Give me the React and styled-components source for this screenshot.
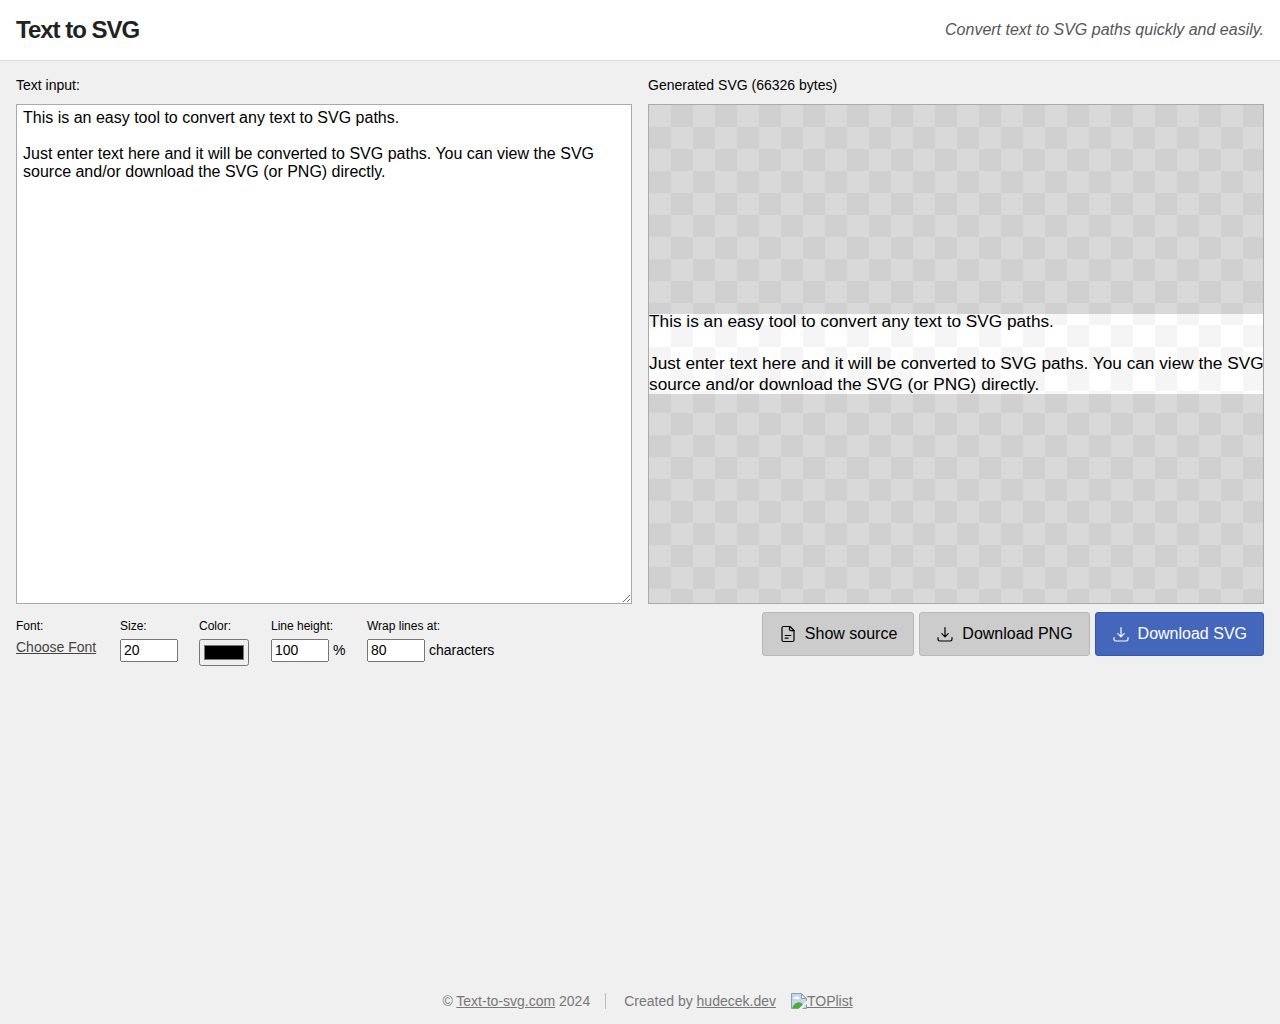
import React, { useState } from "react";
import styled, { createGlobalStyle, css } from "styled-components";

const GlobalStyle = createGlobalStyle`
  *, *::before, *::after { box-sizing: border-box; }
  body {
    margin: 0;
    background: #f0f0f0;
    color: #000;
    font-family: "Liberation Sans", Arial, Helvetica, sans-serif;
    font-size: 14px;
    line-height: 16px;
  }
`;

const Page = styled.div`
  min-height: 100vh;
  display: flex;
  flex-direction: column;
`;

const Header = styled.header`
  display: flex;
  align-items: center;
  justify-content: space-between;
  padding: 16px;
  background: #fff;
  border-bottom: 1px solid #ddd;
`;

const Title = styled.h1`
  margin: 0;
  color: #222;
  font-size: 24px;
  line-height: 28px;
  letter-spacing: -1px;
`;

const Tagline = styled.p`
  margin: 0;
  color: #555;
  font-size: 16px;
  line-height: 18px;
  font-style: italic;
`;

const Main = styled.main`
  flex: 1;
  display: grid;
  grid-template-columns: 1fr 1fr;
  align-items: start;
  gap: 16px;
  padding: 16px;
`;

const Column = styled.section`
  display: flex;
  flex-direction: column;
  min-width: 0;
`;

const captionStyle = css`
  margin: 0 0 11px;
  font-size: 14px;
  font-weight: normal;
  line-height: 16px;
`;

const Caption = styled.label`
  ${captionStyle}
`;

const PreviewCaption = styled.h2`
  ${captionStyle}
`;

const panelStyle = css`
  height: 500px;
  border: 1px solid #aaa;
`;

const TextInput = styled.textarea`
  ${panelStyle}
  width: 100%;
  margin: 0;
  padding: 4px 6px;
  border-radius: 0;
  outline: none;
  resize: vertical;
  background: #fff;
  color: #000;
  font-family: inherit;
  font-size: 16px;
  line-height: 18px;
`;

const Preview = styled.div`
  ${panelStyle}
  display: flex;
  align-items: center;
  overflow: hidden;
  background: repeating-conic-gradient(#f5f5f5 0% 25%, #fff 0% 50%) 0 0 / 44px 44px;
`;

const Output = styled.svg`
  display: block;
  width: 100%;
  overflow: visible;
  box-shadow: 0 0 0 1000px rgba(0, 0, 0, 0.15);
  font-family: "Liberation Sans", Arial, sans-serif;
  font-size: 20px;
`;

const Controls = styled.form`
  display: grid;
  grid-template-columns: 83px 58px 51px 75px auto;
  justify-content: start;
  column-gap: 21px;
  padding-top: 15px;
`;

const Field = styled.div`
  display: flex;
  flex-direction: column;
  align-items: flex-start;
  gap: 6px;
`;

const FieldLabel = styled.label`
  font-size: 12px;
  line-height: 14px;
`;

const FieldRow = styled.div`
  display: flex;
  align-items: baseline;
  gap: 4px;
`;

const NumberInput = styled.input`
  width: 58px;
  height: 23px;
  margin: 0;
  padding: 1px 2px 2px;
  color: #000;
  font-family: inherit;
  font-size: 14px;
`;

const ColorInput = styled.input`
  width: 50px;
  height: 27px;
  margin: 0;
`;

const FontLink = styled.a`
  color: #444;
`;

const Actions = styled.div`
  display: flex;
  flex-wrap: wrap;
  justify-content: flex-end;
  gap: 5px;
  padding-top: 8px;
`;

const Button = styled.button`
  display: flex;
  align-items: center;
  gap: 8px;
  height: 44px;
  padding: 0 16px;
  border: 1px solid ${(p) => (p.$primary ? "#3656a8" : "#b8b8b8")};
  border-radius: 3px;
  background: ${(p) => (p.$primary ? "#4466bb" : "#ccc")};
  color: ${(p) => (p.$primary ? "#fff" : "#000")};
  font-family: inherit;
  font-size: 16px;
  line-height: 18px;
  cursor: pointer;
`;

const Icon = styled.svg`
  width: 18px;
  height: 18px;
  fill: none;
  stroke: currentColor;
  stroke-width: 1.2;
  stroke-linecap: round;
  stroke-linejoin: round;
`;

const Footer = styled.footer`
  display: flex;
  justify-content: center;
  align-items: center;
  padding: 15px 0 15px 15px;
  color: #777;
`;

const FooterItem = styled.span`
  padding: 0 ${(p) => (p.$divided ? 15 : 0)}px 0 ${(p) => (p.$indent ? 18 : 0)}px;
  border-right: ${(p) => (p.$divided ? "1px solid #bbb" : "0")};
`;

const FooterLink = styled.a`
  color: inherit;
`;

const BadgeLink = styled(FooterLink)`
  display: flex;
  margin-left: 15px;
`;

function FileIcon() {
  return (
    <Icon viewBox="0 0 18 18" aria-hidden="true">
      <path d="M4.500 1.500h6.500l4 4v9.500a1.500 1.500 0 0 1-1.500 1.500h-9a1.500 1.500 0 0 1-1.500-1.500V3a1.500 1.500 0 0 1 1.500-1.500z" />
      <path d="M10.500 1.500v2.800a1.400 1.400 0 0 0 1.400 1.400h3M6.200 10.500h5.600M6.200 13.200h2.800" />
    </Icon>
  );
}

function DownloadIcon() {
  return (
    <Icon viewBox="0 0 18 18" aria-hidden="true">
      <path d="M9 2.500v9.200M5.800 8.600 9 11.800l3.200-3.200" />
      <path d="M2 12.500v1.600a1.900 1.900 0 0 0 1.900 1.900h10.200a1.900 1.900 0 0 0 1.900-1.900v-1.600" />
    </Icon>
  );
}

function MissingImage() {
  return (
    <svg width="16" height="16" viewBox="0 0 16 16" aria-hidden="true">
      <path d="M.5 .5h10l5 5v10H.5z" fill="#c3d6f8" />
      <path d="M2.500 6c0-1.300 .8-1.800 1.700-1.700C4.800 2.800 7 2.800 7.300 4.300 8.300 4.300 8.700 5 8.700 6z" fill="#fff" />
      <path d="M1 15.200C2.500 11.500 5 9.300 8 9.300c2 0 3.300 1.200 4 2.700l-3.500 3.200z" fill="#4caf2c" />
      <path d="M8 15.500H.5V.5h10l5 5V8" fill="none" stroke="#999" />
      <path d="M10.500 1v4.500H15z" fill="#fff" stroke="#999" />
      <path d="M16 7.500v3L10.500 16H7.500z" fill="#f0f0f0" />
      <path d="M15.500 11.500v4h-4" fill="none" stroke="#999" />
    </svg>
  );
}

const LINES = [
  { baseline: 15, text: "This is an easy tool to convert any text to SVG paths." },
  {
    baseline: 64,
    text: "Just enter text here and it will be converted to SVG paths. You can view the SVG",
  },
  { baseline: 88, text: "source and/or download the SVG (or PNG) directly." },
];

const SAMPLE = `${LINES[0].text}\n\n${LINES[1].text} ${LINES[2].text}`;

export default function App() {
  const [text, setText] = useState(SAMPLE);
  return (
    <Page>
      <GlobalStyle />
      <Header>
        <Title>Text to SVG</Title>
        <Tagline>Convert text to SVG paths quickly and easily.</Tagline>
      </Header>
      <Main>
        <Column>
          <Caption htmlFor="source">Text input:</Caption>
          <TextInput
            id="source"
            spellCheck={false}
            value={text}
            onChange={(e) => setText(e.target.value)}
          />
          <Controls>
            <Field>
              <FieldLabel as="span">Font:</FieldLabel>
              <FontLink href="#font">Choose Font</FontLink>
            </Field>
            <Field>
              <FieldLabel htmlFor="size">Size:</FieldLabel>
              <NumberInput id="size" type="number" defaultValue="20" />
            </Field>
            <Field>
              <FieldLabel htmlFor="color">Color:</FieldLabel>
              <ColorInput id="color" type="color" defaultValue="#000000" />
            </Field>
            <Field>
              <FieldLabel htmlFor="line-height">Line height:</FieldLabel>
              <FieldRow>
                <NumberInput id="line-height" type="number" defaultValue="100" />
                <span>%</span>
              </FieldRow>
            </Field>
            <Field>
              <FieldLabel htmlFor="wrap">Wrap lines at:</FieldLabel>
              <FieldRow>
                <NumberInput id="wrap" type="number" defaultValue="80" />
                <span>characters</span>
              </FieldRow>
            </Field>
          </Controls>
        </Column>
        <Column>
          <PreviewCaption>Generated SVG (66326 bytes)</PreviewCaption>
          <Preview>
            <Output viewBox="0 0 713 93">
              {LINES.map((line) => (
                <text key={line.baseline} x="0" y={line.baseline}>
                  {line.text}
                </text>
              ))}
            </Output>
          </Preview>
          <Actions>
            <Button type="button">
              <FileIcon />
              Show source
            </Button>
            <Button type="button">
              <DownloadIcon />
              Download PNG
            </Button>
            <Button type="button" $primary>
              <DownloadIcon />
              Download SVG
            </Button>
          </Actions>
        </Column>
      </Main>
      <Footer>
        <FooterItem $divided>
          © <FooterLink href="#home">Text-to-svg.com</FooterLink> 2024
        </FooterItem>
        <FooterItem $indent>
          Created by <FooterLink href="#author">hudecek.dev</FooterLink>
        </FooterItem>
        <BadgeLink href="#toplist">
          <MissingImage />
          TOPlist
        </BadgeLink>
      </Footer>
    </Page>
  );
}
